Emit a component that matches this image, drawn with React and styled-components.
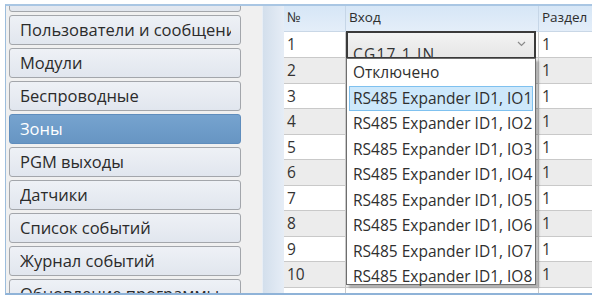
import React from 'react';
import styled, { createGlobalStyle } from 'styled-components';

const GlobalStyle = createGlobalStyle`
    body {
        margin: 0;
        background: #ffffff;
        font-family: "Open Sans", "Noto Sans", sans-serif;
        color: #222;
    }
`;

const Frame = styled.div`
    margin: 4px 0 0 5px;
    width: 587px;
    height: 291px;
    box-sizing: border-box;
    border-top: 2px solid #a9c6e3;
    border-left: 1px solid #9dbddc;
    border-bottom: 2px solid #8fb3d8;
    display: flex;
    overflow: hidden;
    background: #f0f0f0;
`;

const Sidebar = styled.div`
    width: 256px;
    flex-shrink: 0;
    overflow: hidden;
    background: #f0f0f0;
`;

const MenuList = styled.div`
    display: flex;
    flex-direction: column;
    gap: 3px;
    margin-top: -24px;
    padding-left: 3px;
`;

const MenuButton = styled.div`
    width: 232px;
    height: 30px;
    box-sizing: border-box;
    flex-shrink: 0;
    border: 1px solid ${(p) => (p.$active ? '#5f8dbd' : '#a3a6ab')};
    border-radius: 3px;
    background: ${(p) =>
        p.$active
            ? 'linear-gradient(#76a3cf, #6795c3)'
            : 'linear-gradient(#eef1f6, #e1e6ee)'};
    color: ${(p) => (p.$active ? '#ffffff' : '#2b2b2b')};
    font-size: 16.5px;
    line-height: 28px;
    padding: 0 9px 0 10px;
`;

const Label = styled.span`
    display: block;
    white-space: nowrap;
    overflow: hidden;
`;

const RowHeaders = styled.div`
    width: 21px;
    flex-shrink: 0;
    background: linear-gradient(90deg, #d3dfec, #e6edf6);
    border-left: 1px solid #e8eef5;
`;

const Grid = styled.div`
    width: 309px;
    flex-shrink: 0;
    background: #ffffff;
    border-right: 1px solid #6f7377;
    position: relative;
`;

const cols = '62px 193px 1fr';

const HeaderRow = styled.div`
    display: grid;
    grid-template-columns: ${cols};
    height: 26px;
    background: linear-gradient(#d6e6f6, #e4eef9);
    border-bottom: 1px solid #c9d7e6;
    box-sizing: border-box;
`;

const HeaderCell = styled.div`
    font-size: 13.5px;
    color: #2d2d2d;
    padding: 2px 0 0 3px;
    border-right: 1px solid #c6d6e7;
    &:last-child {
        border-right: none;
    }
`;

const Row = styled.div`
    display: grid;
    grid-template-columns: ${cols};
    height: ${(p) => (p.$first ? '26px' : '25.5px')};
    box-sizing: border-box;
    background: ${(p) => (p.$even ? '#ececec' : '#ffffff')};
    border-bottom: 1px solid #c9c9c9;
`;

const Cell = styled.div`
    font-size: 15.5px;
    color: #333;
    padding-left: 3px;
    line-height: 24px;
    border-right: 1px solid #c9c9c9;
    position: relative;
    &:last-child {
        border-right: none;
    }
`;

const Combo = styled.div`
    position: absolute;
    left: 0;
    right: 2px;
    top: -1px;
    bottom: -1px;
    border: 2px solid #3a3a3a;
    border-bottom-width: 1px;
    background: linear-gradient(#f3f3f3, #e6e6e6);
    overflow: hidden;
    z-index: 2;
`;

const ComboText = styled.div`
    font-size: 15.5px;
    color: #333;
    padding: 11px 0 0 5px;
    line-height: 20px;
    letter-spacing: 1.2px;
`;

const Chevron = styled.svg`
    position: absolute;
    right: 8px;
    top: 8px;
`;

const DropList = styled.div`
    position: absolute;
    left: 0;
    right: 2px;
    top: 100%;
    margin-top: 1px;
    height: 227px;
    box-sizing: border-box;
    background: #ffffff;
    border: 1px solid #6e6e6e;
    box-shadow: 3px 3px 2px rgba(0, 0, 0, 0.25);
    z-index: 3;
    padding: 1px 2px;
`;

const Option = styled.div`
    height: 25.5px;
    box-sizing: border-box;
    font-size: 15.5px;
    line-height: 23px;
    color: #2f2f2f;
    padding-left: 3px;
    white-space: nowrap;
    border: 1px solid ${(p) => (p.$hover ? '#7fc1ef' : 'transparent')};
    background: ${(p) => (p.$hover ? '#cde8fb' : 'transparent')};
`;

const menu = [
    'Общие',
    'Пользователи и сообщения',
    'Модули',
    'Беспроводные',
    'Зоны',
    'PGM выходы',
    'Датчики',
    'Список событий',
    'Журнал событий',
    'Обновление программы',
];

const options = [
    'Отключено',
    'RS485 Expander ID1, IO1',
    'RS485 Expander ID1, IO2',
    'RS485 Expander ID1, IO3',
    'RS485 Expander ID1, IO4',
    'RS485 Expander ID1, IO5',
    'RS485 Expander ID1, IO6',
    'RS485 Expander ID1, IO7',
    'RS485 Expander ID1, IO8',
];

const rows = Array.from({ length: 11 }, (_, i) => i + 1);

const App = () => {
    return (
        <>
            <GlobalStyle />
            <Frame>
                <Sidebar>
                    <MenuList>
                        {menu.map((m) => (
                            <MenuButton key={m} $active={m === 'Зоны'}>
                                <Label>{m}</Label>
                            </MenuButton>
                        ))}
                    </MenuList>
                </Sidebar>
                <RowHeaders />
                <Grid>
                    <HeaderRow>
                        <HeaderCell>№</HeaderCell>
                        <HeaderCell>Вход</HeaderCell>
                        <HeaderCell>Раздел</HeaderCell>
                    </HeaderRow>
                    {rows.map((n) => (
                        <Row key={n} $even={n % 2 === 0} $first={n === 1}>
                            <Cell>{n}</Cell>
                            <Cell>
                                {n === 1 && (
                                    <Combo>
                                        <ComboText>CG17 1 IN</ComboText>
                                        <Chevron width="9" height="6" viewBox="0 0 9 6">
                                            <path d="M1 1 L4.5 4.5 L8 1" fill="none" stroke="#8a8a8a" strokeWidth="1.2" />
                                        </Chevron>
                                    </Combo>
                                )}
                                {n === 1 && (
                                    <DropList>
                                        {options.map((o, i) => (
                                            <Option key={o} $hover={i === 1}>
                                                {o}
                                            </Option>
                                        ))}
                                    </DropList>
                                )}
                            </Cell>
                            <Cell>1</Cell>
                        </Row>
                    ))}
                </Grid>
            </Frame>
        </>
    );
};

export default App;
